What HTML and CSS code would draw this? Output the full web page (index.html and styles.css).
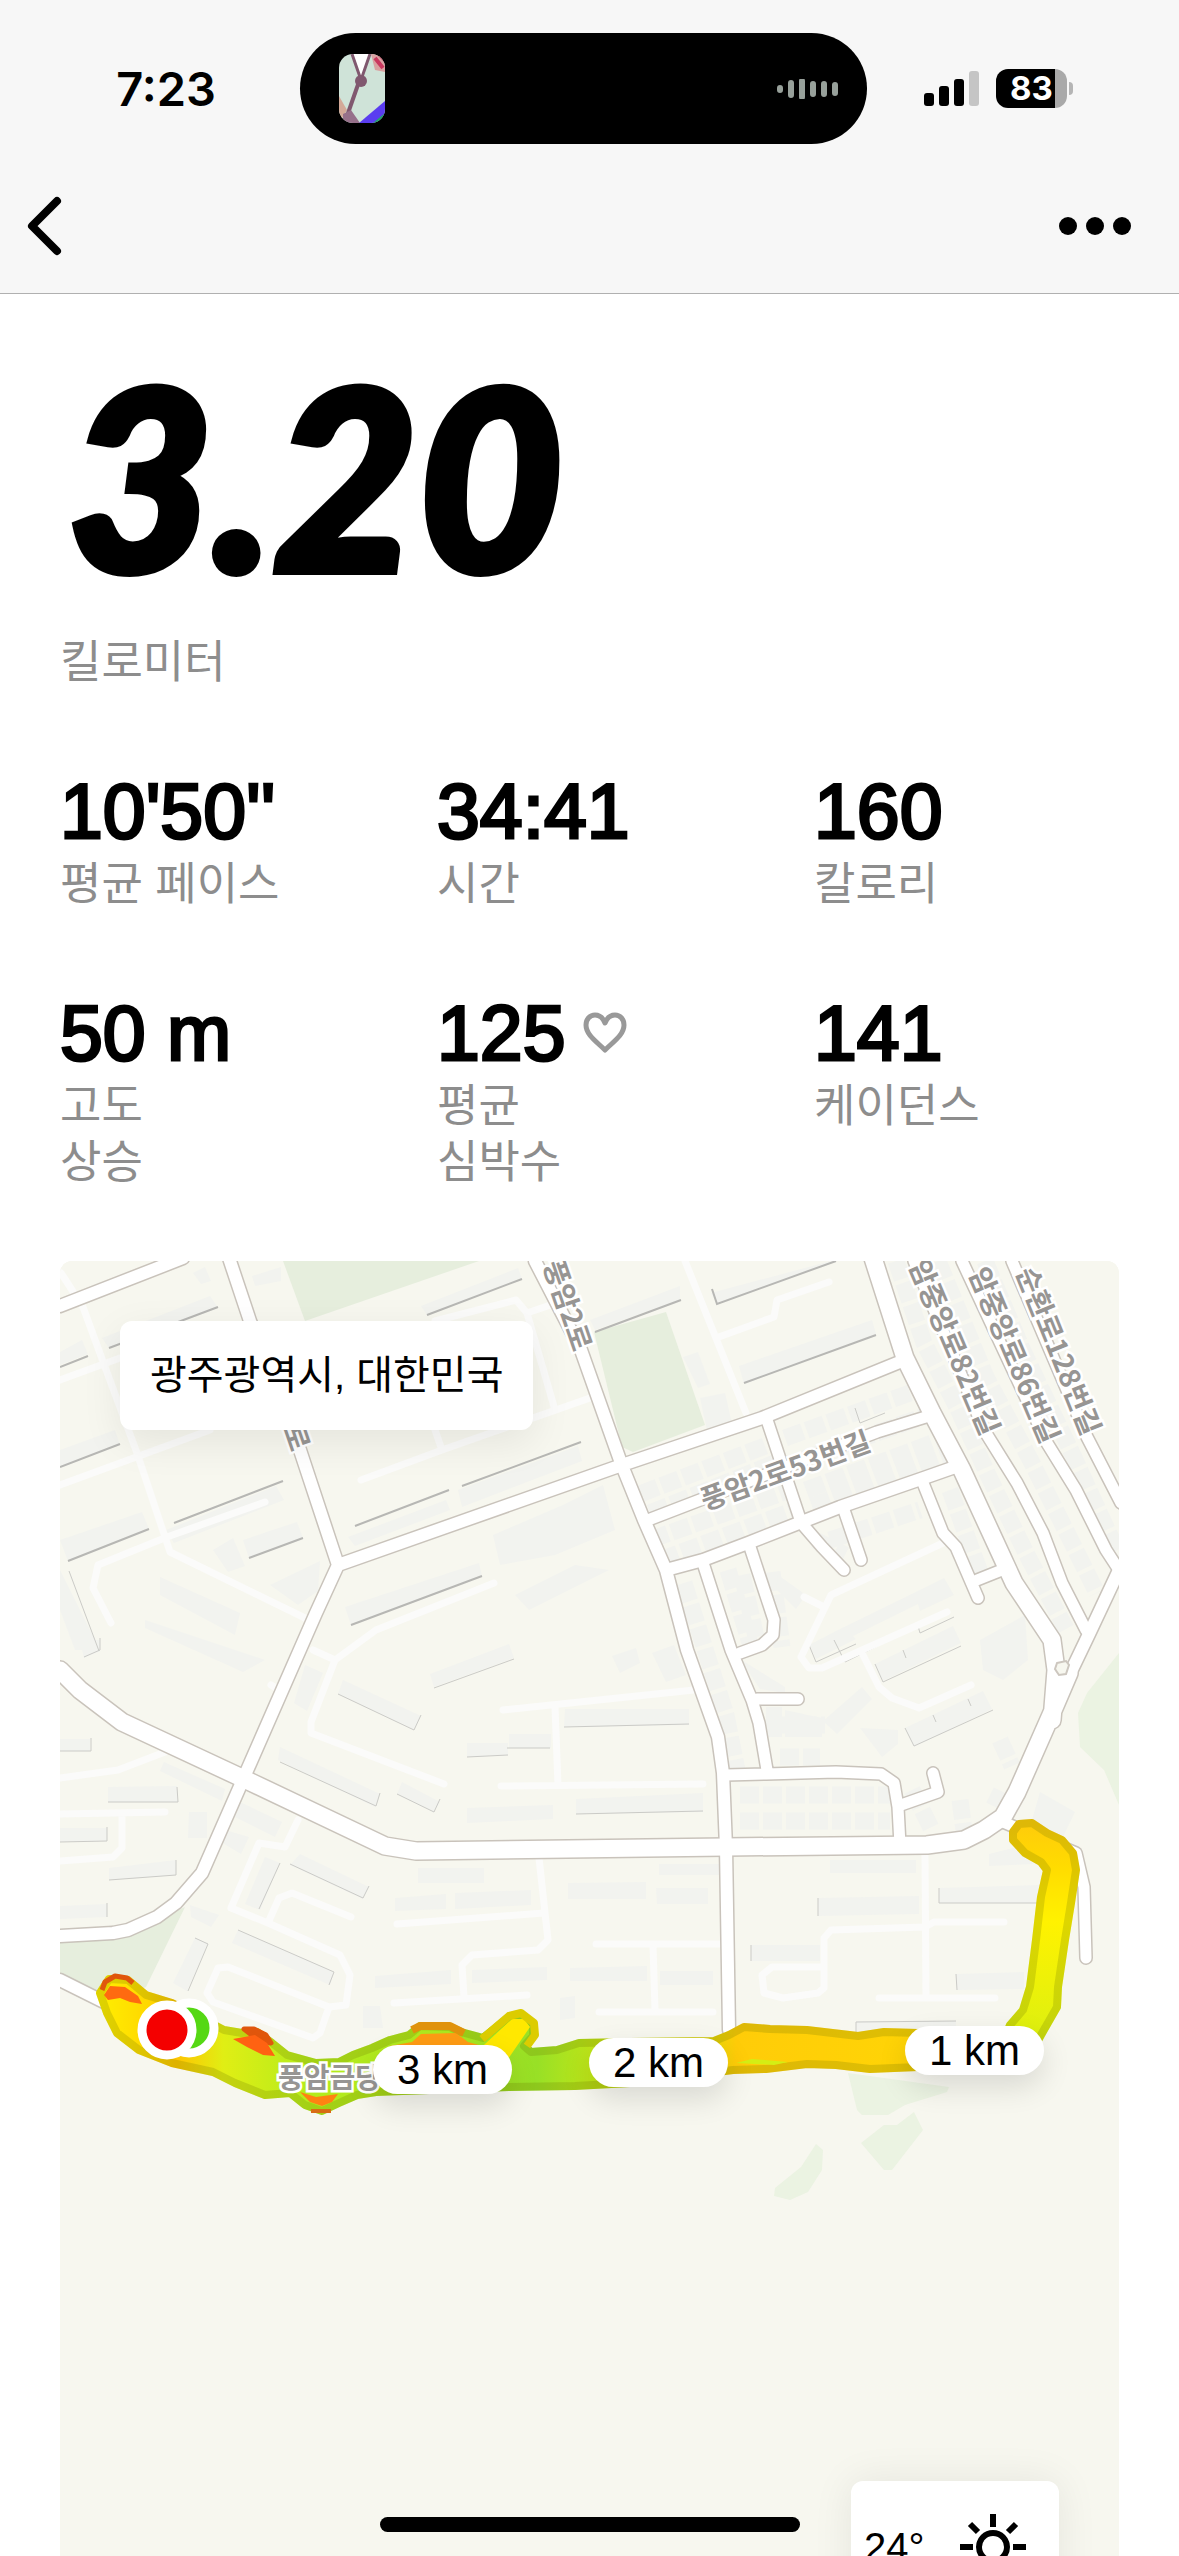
FILE: index.html
```
<!DOCTYPE html>
<html lang="ko">
<head>
  <meta charset="UTF-8">
  <meta name="viewport" content="width=device-width, initial-scale=1.0">
  <title>러닝 기록</title>
  <link rel="stylesheet" href="styles.css">
</head>
<body>

  <header class="header">
    <div class="status-bar">
      <time class="clock">7:23</time>
      <div class="island">
        <svg class="thumb" viewBox="0 0 46 69" aria-hidden="true">
          <rect width="46" height="69" fill="#cfe3d8"/>
          <path d="M32 0h14v18l-10-2z" fill="#d9a0a0"/>
          <path d="M36 4l8 10M40 0l6 6" stroke="#c9385f" stroke-width="4"/>
          <path d="M0 42l8 14-8 13z" fill="#d3a998"/>
          <path d="M13 0l9 26 9-26" fill="#fff" stroke="#80586f" stroke-width="3"/>
          <path d="M22 22L8 62" stroke="#80586f" stroke-width="4" fill="none"/>
          <circle cx="22" cy="27" r="6" fill="#80586f"/>
          <path d="M4 60l8-4 9 13H4z" fill="#96708a"/>
          <path d="M20 69l26-22v14l-10 8z" fill="#5a3df0"/>
          <path d="M34 69l12-10v10z" fill="#22a36a"/>
        </svg>
        <svg class="wave" viewBox="0 0 62 20" aria-hidden="true">
          <path d="M3 9v2M14 4v12M25 2v16M36 5v10M47 5v10M58 6v8" stroke="#97a09a" stroke-width="6" stroke-linecap="round"/>
        </svg>
      </div>
      <div class="indicators">
        <svg class="signal" viewBox="0 0 55 36" aria-hidden="true">
          <rect x="0" y="22" width="10" height="13" rx="3"/>
          <rect x="15" y="15" width="10" height="20" rx="3"/>
          <rect x="30" y="8" width="10" height="27" rx="3"/>
          <rect x="45" y="0" width="10" height="35" rx="3" fill="#c5c5c5"/>
        </svg>
        <div class="battery"><span class="battery-level">83</span></div>
      </div>
    </div>
    <nav class="nav">
      <button class="icon-button" aria-label="뒤로">
        <svg width="40" height="64" viewBox="0 0 40 64"><path d="M33 7L8 32l25 25" fill="none" stroke="#000" stroke-width="8" stroke-linecap="round" stroke-linejoin="round"/></svg>
      </button>
      <button class="icon-button" aria-label="더보기">
        <svg width="76" height="64" viewBox="0 0 76 64"><circle cx="11" cy="32" r="9"/><circle cx="38" cy="32" r="9"/><circle cx="65" cy="32" r="9"/></svg>
      </button>
    </nav>
  </header>

  <main class="content">
    <section class="distance">
      <h1 class="distance-value">3.20</h1>
      <p class="label">킬로미터</p>
    </section>

    <section class="stats">
      <div class="stat">
        <div class="value">10'50''</div>
        <div class="label">평균 페이스</div>
      </div>
      <div class="stat">
        <div class="value">34:41</div>
        <div class="label">시간</div>
      </div>
      <div class="stat">
        <div class="value">160</div>
        <div class="label">칼로리</div>
      </div>
      <div class="stat">
        <div class="value">50 m</div>
        <div class="label">고도<br>상승</div>
      </div>
      <div class="stat">
        <div class="value">125
          <svg class="heart" viewBox="0 0 44 42" aria-hidden="true"><path d="M22 38C14 30 3 23 3 13 3 7 7 3 12 3c5 0 8 3 10 8 2-5 5-8 10-8 5 0 9 4 9 10 0 10-11 17-19 25z" fill="none" stroke="#999" stroke-width="5" stroke-linejoin="round"/></svg>
        </div>
        <div class="label">평균<br>심박수</div>
      </div>
      <div class="stat">
        <div class="value">141</div>
        <div class="label">케이던스</div>
      </div>
    </section>

    <section class="map">
      <svg class="map-canvas" viewBox="60 1261 1059 1420" preserveAspectRatio="xMidYMin slice" aria-hidden="true">
        <defs>
          <linearGradient id="pace-x" gradientUnits="userSpaceOnUse" x1="100" y1="0" x2="1050" y2="0">
            <stop offset="0" stop-color="#ffee00"/>
            <stop offset=".05" stop-color="#ffd800"/>
            <stop offset=".08" stop-color="#ffc400"/>
            <stop offset=".13" stop-color="#e0ee14"/>
            <stop offset=".22" stop-color="#b4ec1c"/>
            <stop offset=".34" stop-color="#b0e81e"/>
            <stop offset=".46" stop-color="#98e026"/>
            <stop offset=".55" stop-color="#d4e810"/>
            <stop offset=".64" stop-color="#e8dc08"/>
            <stop offset=".67" stop-color="#ffcc08"/>
            <stop offset=".85" stop-color="#ffd406"/>
            <stop offset="1" stop-color="#dcf010"/>
          </linearGradient>
          <linearGradient id="pace-y" gradientUnits="userSpaceOnUse" x1="0" y1="1825" x2="0" y2="2040">
            <stop offset="0" stop-color="#ffcc0a"/>
            <stop offset=".2" stop-color="#ffdc00"/>
            <stop offset=".45" stop-color="#fff200"/>
            <stop offset="1" stop-color="#dcf010"/>
          </linearGradient>
          <path id="road-s" d="M914 1261l70 169 33 53 26 50 19 50 24 47M962 1261l85 182 29 47 30 60 13 20M1012 1261l75 176 34 66M648 1520l52-20 177-68 52-16M766 1417l35 105M803 1525l19 22 22 23M844 1510l17 50M923 1483l20 50 13 14 22 51M977 1580l30-12M703 1563l28 87 21 50 7 23 8 47M750 1547l24 73-1 15-11 10-22 8M757 1699h41M726 1775l40-1 70-2 45 2 13 9 4 24 2 38M901 1805l37-13-5-19M1003 1822l73 31 8 34 2 71"/>
          <path id="road-m" d="M60 1306l123-48M229 1258l21 63 50 129 38 115-22 48-71 162-43 98-26 30-19 14-29 13-15 3-53 3M338 1565l284-100 140-47 145-59M535 1261l46 89 40 113 23 57 22 50 21 80 31 87 5 36 3 74 3 183M666 1570l37-10 45-17 51-20 41-16 78-27 40-14M1119 1570l-30 64-22 46M60 1980l64 32"/>
          <path id="road-l" d="M60 1670l20 20 42 32 120 56 143 68 31 5 310-4 201-2 37-5 20-10 19-13 14-25 34-77 18-42M873 1258l32 100 27 55 30 57 29 63 23 50 38 57 4 30-4 50"/>
          <path id="track-x" d="M1000 2034L918 2033 884 2032 858 2036 807 2030 770 2029 744 2027 729 2035 714 2041 630 2042 579 2043 557 2050 531 2052 524 2046 533 2036 533 2024 520 2014 509 2017 483 2038 461 2032 450 2027 420 2026 409 2035 390 2040 372 2048 353 2055 339 2062 316 2063 287 2055 272 2043 257 2032 242 2033 224 2030 172 2003 146 1995 128 1980 109 1979 100 1993 107 2013 117 2033 139 2050 172 2063 213 2072 235 2083 265 2095 290 2093 305 2105 322 2111 339 2103 357 2095 376 2092 509 2087 575 2086 630 2083 733 2070 766 2069 807 2064 836 2065 870 2069 918 2067 1000 2062z"/>
          <path id="track-y" d="M1030 2055L1041 2035 1057 2007 1058 1987 1065 1940 1071 1903 1076 1870 1073 1853 1062 1840 1047 1833 1032 1823 1019 1824 1013 1832 1013 1840 1025 1853 1041 1862 1047 1870 1041 1897 1036 1940 1030 1987 1023 2010 1010 2025 1000 2050"/>
        </defs>

        <rect x="60" y="1261" width="1059" height="1420" fill="#f7f7ef"/>

        <!-- parks -->
        <g fill="#e6eedd">
          <path d="M283 1261l22 60 174-60z"/>
          <path d="M594 1332l72-20 39 113-72 27-11-5z"/>
          <path d="M60 1943l68-10 57-26-39 80-46 20-40-34z"/>
        </g>
        <g fill="#ebf3e2">
          <path d="M1119 1653l-32 40-9 20 2 34 24 23 15 35z"/>
          <path d="M848 2073l101 14-2 5-42 13-17 10h-26l-5-5z"/>
          <path d="M914 2112l9 18-31 40h-8l-23-27 23-18h13z"/>
          <path d="M816 2144l7 6-1 20-14 22-18 8-16-4 1-8 26-21z"/>
        </g>

        <!-- building lots in rows -->
        <g class="lots">
          <path d="M896 1261l28 82 34 66 30 66 38 78 40 76"/>
          <path d="M938 1261l48 116 46 86 45 90 20 40"/>
          <path d="M985 1261l38 90 48 100 46 100"/>
          <path d="M640 1494l125-48M650 1513l130-52M650 1540l140-50M660 1560l135-50"/>
          <path d="M785 1438l125-45M790 1464l140-50M806 1490l140-52M812 1506l134-50"/>
          <path d="M684 1583l42 132 12 60M742 1575l14 62M728 1570l24 80"/>
          <path d="M772 1572l10 75M830 1540l90-30M950 1490l32 88M815 1540l30 15"/>
          <path d="M740 1795h155M740 1821h150M775 1725h50M780 1757h40M960 1800l4 30M1000 1740l12 26M990 1795l20 10M912 1790l20 40"/>
        </g>

        <!-- buildings -->
        <g fill="#f2f3ef">
          <path d="M102 1338l108-42 8 12-109 40zM60 1352l22-12 6 14-28 11zM193 1273l12-6 6 14-10 3zM252 1276l29-9v14l-26 5z"/>
          <path d="M421 1306l97-38 4 11-95 36zM60 1450l55-20 5 15-60 22zM60 1540l82-28 7 17-81 32zM166 1530l110-44 8 14-110 43z"/>
          <path d="M243 1540l54-18 6 16-54 20zM348 1537l98-37 4 10-95 36zM458 1490l120-44 4 15-120 46zM590 1320l90-34v14l-85 30zM711 1293l120-32h5l-119 43z"/>
          <path d="M739 1366l133-46 4 14-132 50zM345 1607l134-44 3 13-131 49zM493 1535l70-30 40-20 12 45-60 25-55 10z"/>
          <path d="M515 1595l60-30 34 5-80 40zM60 1570l40 80h-25l-15-40zM160 1577l80 36-5 22-75-40zM145 1620l120 40-22 12-98-44z"/>
          <path d="M213 1550l20-12 12 28-17 6zM270 1585l50-24-2 30-20 14zM80 1640h20v11l-16 7z"/>
          <path d="M430 1674l79-30 5 14-80 29zM343 1680l78 36-7 14-76-36zM280 1747l100 47-5 13-97-47zM402 1782l38 20-6 10-37-18z"/>
          <path d="M305 1665l18 8-16 38-13-8zM565 1709h124v16l-125 2zM467 1743h41v12l-41 2zM509 1734h42v14h-42zM467 1808l86-3v14l-86 4zM576 1799l127-6v19l-127 2z"/>
          <path d="M60 1739h30v12H60zM108 1787l69-1 1 16h-70zM60 1828h47v13l-47 1zM109 1868l67-8v15l-67 5zM60 1906l47-2v13l-47 2zM189 1812h18v26h-19z"/>
          <path d="M164 1762l61 27-3 12-62-30zM240 1802l42 20-7 15-40-20zM225 1830l24 7-8 17-20-12zM265 1857l15 6-20 47-15-6zM300 1854l69 33-6 12-73-34z"/>
          <path d="M190 1905l29 10-8 12-20-10zM195 1938l13 5-21 48-14-8zM238 1930l96 42-4 13-98-42z"/>
          <path d="M418 1868h66v15h-66zM395 1898l51-4v15l-51 2zM455 1893l76-3v15l-76 4zM568 1883l78-1v17h-78zM375 1976l76-6v14l-76 4zM472 1970l75-3v13l-75 3zM570 1968l77-2v15h-77z"/>
          <path d="M659 1864h60v11h-60zM656 1888h52v16h-51zM830 1860h86v13h-86zM818 1898l101-2v18l-101 2zM939 1888l102-3-3 18h-99zM751 1945h69v16h-69zM956 1974l68-2v17l-67 1z"/>
          <path d="M660 1971h53v14h-53zM363 2006h17l3 22h-20zM560 1998l15-2v22l-15 2zM856 2021h100v14H856zM989 1854l40-10 4 20-44 2z"/>
          <path d="M834 1632l90-44 20-10 10 17-34 16-2-7-73 36zM875 1664l78-38 8 17-78 38zM905 1728l78-37 9 18-78 38zM809 1645l35-18 12 12-40 20zM1040 1792l35 20-17 35-28-20z"/>
          <path d="M980 1640l45-25 3 45-25 20-20-10zM862 1687l10 12-35 35-14-13zM860 1728l38 2v14l-16 13zM740 1659l45 28v6l-25-4zM778 1575l28 20-10 14-20-20z"/>
          <path d="M766 1707h16v30h-16zM785 1710l37 8v19h-37zM612 1656l24-8 4 15-20 10zM652 1653l22-8 12 30-20 7zM683 1357l15-5 12 32-12 4zM700 1398l25-5 8 36-25 6z"/>
        </g>
        <path class="edges-dark" d="M109 1348l109-41M60 1367l28-11M427 1315l95-36M60 1467l60-23M68 1561l81-32M174 1523l109-42M249 1558l54-20M355 1526l94-36M462 1486l119-44M595 1332l86-32M836 1261l-119 43-5-15M744 1383l132-48M351 1625l131-49"/>
        <path class="edges-light" d="M69 1571l30 80M434 1688l80-29M84 1657l16-7v-12M564 1727l125-3M507 1748h43M467 1757l41-2M576 1814l127-3M60 1751h31v-13M108 1802h70l-1-15M60 1842l47-1v-14M109 1880l67-5v-15M107 1917v-14M338 1694l76 36 7-15M280 1762l96 44 4-13M397 1794l37 18 6-13M280 1863l-21 46M290 1864l73 34 6-12M195 1938l13 6-20 47M238 1930l96 42-5 13"/>
        <path class="edges-light" d="M834 1640l11 22 73-36 2 7 34-16M875 1664l8 18 78-36M905 1728l9 18 79-36M809 1645l7 17 40-18M903 1650l3 8M933 1715l3 7M968 1699l3 7M818 1898v18M939 1888v15h98M751 1945v16M956 1974l1 16M856 2035v-13l100-1M855 1408l5 15 25-10"/>

        <!-- footpaths -->
        <g class="paths">
          <path d="M61 1273l22 34 22 60 32 86 33 99 135 66M60 1380l60-22M60 1485l150-55M265 1502l-98 35-69 28-5 23 18 35M361 1480l81-30 148-52M442 1450l-7-20M435 1321l81-21 11 13 28 97M527 1313l38-13"/>
          <path d="M494 1583l-118 47-41 30-24 62v11l133 51M313 1650l22 10M271 1685l5 3M60 1778l58-8 47-18M60 1814l105-2M122 1815v33l-9 9-53 4"/>
          <path d="M298 1820l-13 27-26-4-28 65 37 15 72 32 10 20-4 30-17 2-101-40-10 1-11 25 6 9 100 36 7-5 9-26M268 1923l11-25 13-5 59 24"/>
          <path d="M503 1710l191-20M555 1707l3 78M501 1786l202-2M539 1858l9 82-10 10-66 5-10 10 2 32M394 2003l133-8M397 1924l147-11M596 1944h126M599 2012h114M653 1945l2 65"/>
          <path d="M925 1855l1 142M879 1998h116M1004 1922h-70l-9 5-94 3-7 8v50l-6 5-35 5-19-5-2-18 10-8h52"/>
          <path d="M943 1543l-112 52-30 62 8 11h13l125-56M804 1597l18 9M862 1653l17 34 13 11 27 10 52-23M685 1261l61 152M716 1338l58-21 3-17 52-18"/>
        </g>

        <!-- roads: casing first, then surface -->
        <g class="roads roads-case">
          <use href="#road-s"/>
          <use href="#road-m"/>
          <use href="#road-l"/>
        </g>
        <g class="roads roads-top">
          <use href="#road-s"/>
          <use href="#road-m"/>
          <use href="#road-l"/>
        </g>
        <path d="M1057 1663l9-2 3 4-3 9-7 1-4-6z" fill="#f7f7ef" stroke="#cdc7bf" stroke-width="2"/>

        <!-- street names -->
        <g class="street">
          <text transform="translate(582 1350) rotate(71)" dy="9" text-anchor="end">풍암2로</text>
          <text transform="translate(300 1450) rotate(71)" dy="9" text-anchor="end">풍암1로</text>
          <text transform="translate(702 1502) rotate(-20)" dy="9">풍암2로53번길</text>
          <text transform="translate(990 1434) rotate(67)" dy="9" text-anchor="end">암중앙로82번길</text>
          <text transform="translate(1050 1442) rotate(67)" dy="9" text-anchor="end">암중앙로86번길</text>
          <text transform="translate(1091 1434) rotate(68)" dy="9" text-anchor="end">순환로128번길</text>
        </g>

        <!-- route, coloured by pace -->
        <g class="route">
          <use href="#track-x" fill="url(#pace-x)" stroke="url(#pace-x)"/>
          <use href="#track-x" class="route-edge"/>
          <use href="#track-y" fill="url(#pace-y)" stroke="url(#pace-y)"/>
          <use href="#track-y" class="route-edge"/>
          <path d="M102 1990l3-8 10-6 12 2 6 5" fill="none" stroke="#e0560c" stroke-width="5"/>
          <path d="M104 1995l6-9 15 1 13 9 4 8-12-2-10-4-12 2z" fill="#ff6a10"/>
          <path d="M244 2029l10 0 12 6 5 8-14-4z" fill="#e0560c" stroke="#e0560c" stroke-width="5"/>
          <path d="M233 2039l22-4 12 8 8 13-12-1-16-8z" fill="#ff6212"/>
          <path d="M390 2046l22-4 9-8 35-1 12 9 18 5-4 10H385z" fill="#ff9c14"/>
          <path d="M412 2030l8-4h30l14 7" fill="none" stroke="#e0920c" stroke-width="8"/>
          <path d="M472 2056l40-37 12 0 6 8-22 32z" fill="#ffe800"/>
          <path d="M527 2046l8-11-1-12-13-10-12 3-27 23" fill="none" stroke="#dccc00" stroke-width="8"/>
          <path d="M300 2092l16 5 22-3-6 8-10 4-12-4z" fill="#ff8212"/>
          <path d="M311 2111h20" fill="none" stroke="#d86c14" stroke-width="4"/>
          <path d="M736 2063l16-4 36 3-14 3z" fill="#d4ee14"/>
        </g>

        <g class="street">
          <text x="278" y="2088">풍암금당</text>
        </g>
        <g stroke="#fff" stroke-width="9">
          <circle cx="189" cy="2028" r="25" fill="#55d814"/>
          <circle cx="167" cy="2030" r="25" fill="#f40000"/>
        </g>
      </svg>

      <div class="place">광주광역시, 대한민국</div>
      <span class="pin pin-1">1 km</span>
      <span class="pin pin-2">2 km</span>
      <span class="pin pin-3">3 km</span>

      <div class="weather">
        <span>24°</span>
        <svg width="68" height="68" viewBox="0 0 68 68" aria-hidden="true">
          <circle cx="34" cy="34" r="14" fill="none" stroke="#000" stroke-width="6"/>
          <path d="M34 1v13M34 54v13M1 34h13M54 34h13M11 11l8 8M49 49l8 8M11 57l8-8M49 19l8-8" stroke="#000" stroke-width="6"/>
        </svg>
      </div>
    </section>
  </main>

  <div class="home-indicator"></div>

</body>
</html>
```
FILE: styles.css
```
* {
  box-sizing: border-box;
}
body {
  margin: 0;
  height: 100vh;
  display: flex;
  flex-direction: column;
  overflow: hidden;
  background: #fff;
  color: #000;
  font-family: "Liberation Sans", "Noto Sans CJK KR", sans-serif;
}

/* header */
.header {
  flex: none;
  background: #f7f7f7;
  border-bottom: 1px solid #b0b0b0;
}
.status-bar {
  display: grid;
  grid-template-columns: 1fr 567px 1fr;
  align-items: center;
  padding: 33px 12px 0 0;
}
.clock {
  padding-left: 32px;
  text-align: center;
  font-family: Inter, sans-serif;
  font-weight: 600;
  font-size: 47px;
}
.island {
  height: 111px;
  padding: 0 28px 0 39px;
  border-radius: 56px;
  background: #000;
  display: flex;
  align-items: center;
  justify-content: space-between;
}
.thumb {
  width: 46px;
  height: 69px;
  border-radius: 14px;
}
.wave {
  width: 62px;
  height: 20px;
}
.indicators {
  display: flex;
  align-items: center;
  gap: 17px;
  padding-left: 57px;
}
.signal {
  width: 55px;
  height: 36px;
}
.battery {
  position: relative;
  width: 71px;
  height: 39px;
  border-radius: 12px;
  background: linear-gradient(to right, #000 83%, #a9a9a9 83%);
}
.battery::after {
  content: "";
  position: absolute;
  left: 73px;
  top: 13px;
  width: 4px;
  height: 13px;
  border-radius: 0 4px 4px 0;
  background: #b5b5b5;
}
.battery-level {
  display: block;
  line-height: 39px;
  text-align: center;
  color: #fff;
  font-family: Inter, sans-serif;
  font-weight: 700;
  font-size: 33px;
}
.nav {
  display: flex;
  align-items: center;
  justify-content: space-between;
  padding: 50px 46px 35px 24px;
}
.icon-button {
  display: flex;
  padding: 0;
  border: none;
  background: none;
  cursor: pointer;
}

/* run summary */
.content {
  flex: 1;
  min-height: 0;
  overflow: hidden;
  padding: 52px 60px 0;
}
.distance-value {
  margin: 0;
  padding-left: 8px;
  font-family: Lato, sans-serif;
  font-style: italic;
  font-weight: 900;
  font-size: 250px;
  line-height: 256px;
  -webkit-text-stroke: 8px #000;
}
.label {
  margin: 0;
  color: #8d8d8d;
  font-size: 45px;
  line-height: 56px;
}
.distance .label {
  margin-top: 33px;
}
.stats {
  display: grid;
  grid-template-columns: repeat(3, 1fr);
  gap: 76px 72px;
  margin: 76px 0 70px;
}
.value {
  display: flex;
  align-items: center;
  gap: 18px;
  font-size: 77px;
  line-height: 88px;
  -webkit-text-stroke: 3px #000;
}
.heart {
  width: 44px;
  height: 42px;
}
.stat .label {
  margin-top: 2px;
}

/* map */
.map {
  position: relative;
  height: 1420px;
  overflow: hidden;
  border-radius: 12px;
  background: #f7f7ef;
}
.map-canvas {
  display: block;
  width: 100%;
  height: 100%;
}
.lots path {
  fill: none;
  stroke: #f2f3ef;
  stroke-width: 17;
  stroke-dasharray: 19 4;
}
.edges-dark {
  fill: none;
  stroke: #b7b7b4;
  stroke-width: 2;
}
.edges-light {
  fill: none;
  stroke: #cbcbc7;
  stroke-width: 1;
}
.paths path {
  fill: none;
  stroke: #fbfbfa;
  stroke-width: 7;
  stroke-linecap: round;
  stroke-linejoin: round;
}
.roads {
  fill: none;
  stroke-linejoin: round;
  stroke-linecap: round;
}
.roads-case {
  --casing: 3px;
  stroke: #c9c3bb;
}
.roads-top {
  --casing: 0px;
  stroke: #fff;
}
#road-s { stroke-width: calc(11px + var(--casing)); }
#road-m { stroke-width: calc(12px + var(--casing)); }
#road-l { stroke-width: calc(17px + var(--casing)); }
.street text {
  fill: #979593;
  stroke: #fff;
  stroke-width: 5px;
  paint-order: stroke;
  font-family: "Noto Sans CJK KR", sans-serif;
  font-weight: 700;
  font-size: 28px;
}
.route {
  stroke-width: 8px;
  stroke-linejoin: round;
}
.route-edge {
  fill: none;
  stroke: #6a7000;
  stroke-opacity: 0.22;
}
.place {
  position: absolute;
  left: 60px;
  top: 60px;
  padding: 0 30px;
  border-radius: 12px;
  background: #fff;
  box-shadow: 0 12px 40px rgba(0, 0, 0, 0.08);
  font-size: 40px;
  line-height: 109px;
}
.pin {
  position: absolute;
  width: 139px;
  border-radius: 25px;
  background: #fff;
  box-shadow: 0 12px 30px rgba(0, 0, 0, 0.12);
  text-align: center;
  font-size: 42px;
  line-height: 49px;
}
.pin-1 { left: 845px; top: 765px; }
.pin-2 { left: 529px; top: 777px; }
.pin-3 { left: 313px; top: 784px; }
.weather {
  position: absolute;
  right: 60px;
  top: 1220px;
  width: 208px;
  height: 132px;
  padding: 0 32px 0 13px;
  border-radius: 12px;
  background: #fff;
  box-shadow: 0 0 40px rgba(0, 0, 0, 0.08);
  display: flex;
  align-items: center;
  justify-content: space-between;
  font-size: 40px;
}

.home-indicator {
  position: fixed;
  left: 50%;
  bottom: 24px;
  width: 420px;
  height: 15px;
  margin-left: -210px;
  border-radius: 8px;
  background: #000;
}
```
